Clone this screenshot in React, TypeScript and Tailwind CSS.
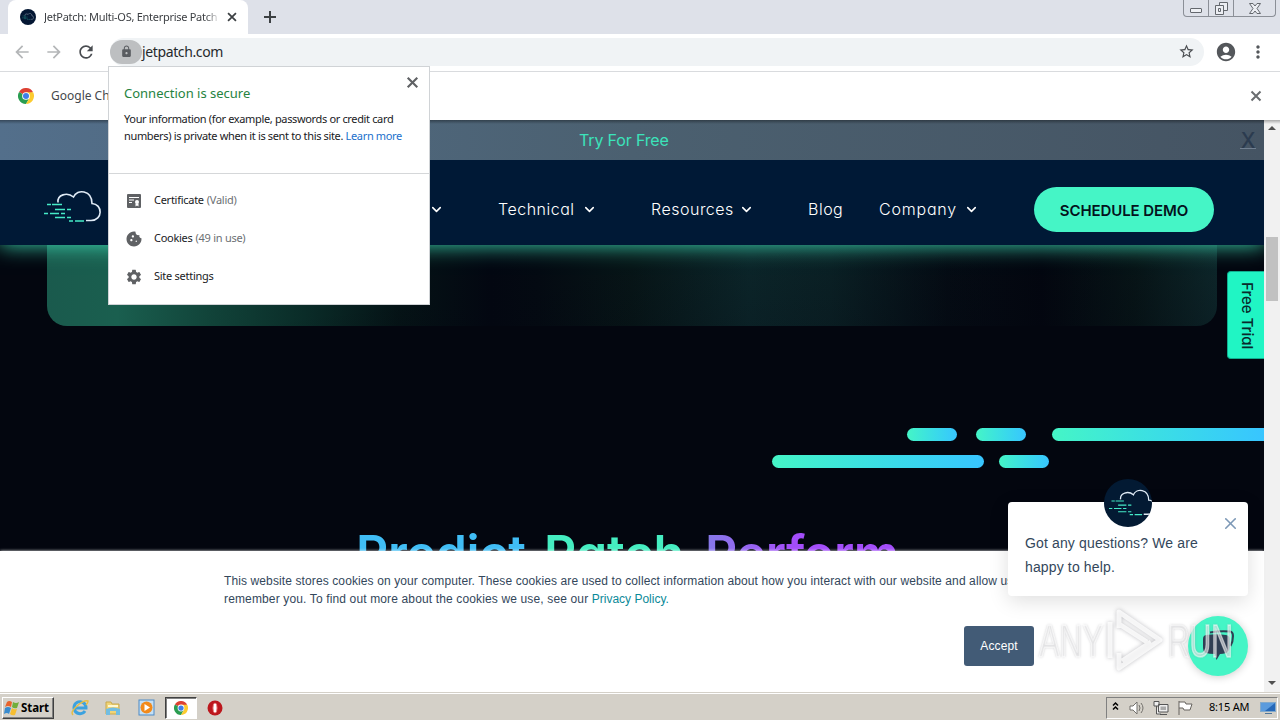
import type { ReactNode } from "react";
import { ChevronDown, X } from "lucide-react";
import {
  MdAccountCircle,
  MdArrowBack,
  MdArrowForward,
  MdCookie,
  MdLock,
  MdMoreVert,
  MdRefresh,
  MdSettings,
  MdStarBorder,
} from "react-icons/md";

function ChromeLogo({ className }: { className: string }) {
  return (
    <svg viewBox="0 0 24 24" className={className}>
      <circle cx="12" cy="12" r="12" fill="#fff" />
      <path d="M12 12 L1.6 6 A12 12 0 0 1 22.4 6 Z" fill="#dd4133" />
      <path d="M12 12 L1.6 6 A12 12 0 0 0 12 24 L17.2 15 Z" fill="#2a9d51" />
      <path d="M12 6.5 H22.7 A12 12 0 0 1 12 24 L17.2 15 Z" fill="#fccb2f" />
      <circle cx="12" cy="12" r="5.8" fill="#fff" />
      <circle cx="12" cy="12" r="4.5" fill="#3f7fe8" />
    </svg>
  );
}

function CloudLogo({ className }: { className: string }) {
  return (
    <svg viewBox="0 0 58 34" fill="none" className={className}>
      <path
        d="M14 12.5 C13 5 23 1.5 29.5 7 C33 -1.5 48 0 48 13.5 C59 14 59 30.500 47 30.500 H42"
        stroke="#dfeaf5"
        strokeWidth="1.600"
      />
      <path
        d="M3 14.500H7M8 14.500H18M11 19.500H21M23 19.500H27M0 23.500H4M6 23.500H15M17 23.500H21M11 27.500H21M23 27.500H27M25 31H29M31 31H40"
        stroke="#45ebc8"
        strokeWidth="1.300"
      />
    </svg>
  );
}

function CloseIcon({ className }: { className: string }) {
  return (
    <svg viewBox="0 0 16 16" className={className}>
      <path d="M3.500 3.500L12.500 12.500M12.500 3.500L3.500 12.500" stroke="currentColor" strokeWidth="2" />
    </svg>
  );
}

function TabStrip() {
  return (
    <div className="flex h-[34px] items-start bg-[#dee1e9]">
      <div className="ml-2 flex h-[34px] w-[240px] items-center rounded-t-lg bg-white pl-3">
        <div className="flex size-4 items-center justify-center rounded-full bg-[#041733]">
          <CloudLogo className="w-3" />
        </div>
        <span className="ml-2 w-[176px] overflow-hidden text-[11px] tracking-[-0.28px] whitespace-nowrap text-[#3c3f43] [mask-image:linear-gradient(to_right,#000_92%,transparent)]">
          JetPatch: Multi-OS, Enterprise Patch
        </span>
        <CloseIcon className="ml-[5px] size-3.5 text-[#3c4043]" />
      </div>
      <svg viewBox="0 0 12 12" className="mt-[11px] ml-4 size-3">
        <path d="M6 0V12M0 6H12" stroke="#3c4043" strokeWidth="2" />
      </svg>
      <div className="mr-1 ml-auto flex h-[17px] w-[93px] rounded-b border border-t-0 border-[#8b8f97] text-[#64686e]">
        <div className="flex w-[25px] items-end justify-center border-r border-[#8b8f97] pb-[3px]">
          <div className="h-[5px] w-3 rounded-[1px] border border-current bg-[#eef0f4]" />
        </div>
        <div className="flex w-[25px] items-start justify-center border-r border-[#8b8f97] pt-0.5">
          <svg viewBox="0 0 13 13" fill="#eceef3" stroke="currentColor" className="size-[13px]">
            <path d="M4.500 0.500h8v8h-8z" />
            <path d="M0.500 3.500h8v9h-8zM3.500 6.500h2v3h-2z" />
          </svg>
        </div>
        <div className="flex flex-1 items-start justify-center pt-[3px]">
          <svg viewBox="0 0 12 11" fill="#eceef3" stroke="currentColor" className="h-[11px] w-3">
            <path d="M0.500 0.500h3.500l2 2.500 2-2.500h3.500L8 5.500l3.500 5H8L6 8l-2 2.500H0.500L4 5.500z" />
          </svg>
        </div>
      </div>
    </div>
  );
}

function Toolbar() {
  return (
    <div className="flex h-[38px] items-center border-b border-[#d9dbde] bg-white pl-3">
      <MdArrowBack className="-mt-0.5 size-5 text-[#b4b6b8]" />
      <MdArrowForward className="-mt-0.5 ml-3 size-5 text-[#b4b6b8]" />
      <MdRefresh className="-mt-0.5 ml-3 size-5 text-[#494c50]" />
      <div className="-mt-0.5 ml-3.5 flex h-7 w-[1094px] items-center rounded-full bg-[#f0f3f5]">
        <div className="flex h-6 w-8 items-center justify-center rounded-full bg-[#bdbfc1]">
          <MdLock className="size-[13px] text-[#5a5d61]" />
        </div>
        <span className="text-[14px] tracking-[-0.37px] text-[#26292c]">jetpatch.com</span>
        <MdStarBorder className="mr-[9px] ml-auto size-[17px] text-[#494c50]" />
      </div>
      <MdAccountCircle className="-mt-0.5 ml-[11px] size-[22px] text-[#54575b]" />
      <MdMoreVert className="-mt-px ml-[11px] size-5 text-[#54575b]" />
    </div>
  );
}

function InfoBar() {
  return (
    <div className="flex h-12 items-center bg-white pl-[18px]">
      <ChromeLogo className="size-4" />
      <span className="ml-[17px] text-[12px] text-[#45484c]">Google Ch</span>
      <CloseIcon className="mr-4 ml-auto size-4 text-[#6a6d70]" />
    </div>
  );
}

function SiteRow({ icon, label, detail }: { icon: ReactNode; label: string; detail?: string }) {
  return (
    <div className="flex h-[38px] items-center pl-4 text-[11px] tracking-[-0.27px] text-[#202124]">
      <span className="flex size-[18px] items-center justify-center pt-px text-[#5f6164]">{icon}</span>
      <span className="ml-[11px]">{label}</span>
      {detail && <span className="ml-[3px] text-[#6c6f73]">{detail}</span>}
    </div>
  );
}

function SecurityPopup() {
  return (
    <div className="absolute top-[66px] left-[108px] z-40 flex h-[239px] w-[322px] flex-col border border-[#d0d3d6] bg-white">
      <div className="relative h-[107px] border-b border-[#d5d7d9] pt-[17px] pl-[15px]">
        <div className="text-[13px] leading-[18px] text-[#26833f]">Connection is secure</div>
        <div className="mt-2 text-[11px] leading-[17px] tracking-[-0.35px] whitespace-nowrap text-[#202124]">
          Your information (for example, passwords or credit card
          <br />
          numbers) is private when it is sent to this site.{" "}
          <span className="text-[#2170cc]">Learn more</span>
        </div>
        <CloseIcon className="absolute top-[7px] right-2 size-[17px] text-[#5f6164]" />
      </div>
      <div className="pt-[7px]">
        <SiteRow
          label="Certificate"
          detail="(Valid)"
          icon={
            <svg viewBox="0 0 16 16" className="size-4">
              <rect x="1" y="1" width="14" height="14" rx="1" fill="currentColor" />
              <path d="M3 4.500h10M3 7h5M3 9.500h3" stroke="#fff" strokeWidth="1.200" />
              <path d="M9.500 10.500v3l1.500-1 1.500 1v-3z" fill="#fff" />
              <circle cx="11" cy="9" r="2" fill="#fff" />
            </svg>
          }
        />
        <SiteRow label="Cookies" detail="(49 in use)" icon={<MdCookie className="size-[18px]" />} />
        <SiteRow label="Site settings" icon={<MdSettings className="size-[18px]" />} />
      </div>
    </div>
  );
}

function NavItem({ label, className }: { label: string; className: string }) {
  return (
    <div className={`flex items-center justify-between ${className}`}>
      <span>{label}</span>
      <ChevronDown className="size-[15px]" strokeWidth={2.5} />
    </div>
  );
}

function SiteHeader() {
  return (
    <>
      <div className="relative z-20 flex h-10 shrink-0 items-center bg-linear-to-r from-[#536f8b] via-[#4b6070] to-[#455463]">
        <div className="absolute inset-x-0 top-0 h-1 bg-linear-to-b from-black/35 to-transparent" />
        <span className="ml-[579px] text-[16px] tracking-[-0.15px] text-[#3be4bb]">Try For Free</span>
        <span className="mr-2 ml-auto flex h-[18px] w-4 items-end justify-center border-b border-[#718091] text-[21px] leading-[15px] font-medium text-[#2b3b4f]">
          X
        </span>
      </div>
      <div className="relative z-10 flex h-[85px] shrink-0 items-center bg-[#001936] pt-[13px] text-[16px] font-light tracking-[0.5px] text-white shadow-[0_0_20px_#3cd8b2]">
        <CloudLogo className="-mt-[5px] ml-11 w-[58px]" />
        <ChevronDown className="ml-[327px] size-[15px]" strokeWidth={2.5} />
        <NavItem label="Technical" className="ml-[54px] w-[99px]" />
        <NavItem label="Resources" className="ml-[54px] w-[103px]" />
        <span className="ml-[54px] w-[35px]">Blog</span>
        <NavItem label="Company" className="ml-9 w-[100px] tracking-[0.800px]" />
        <div className="ml-[55px] flex h-[45px] w-[180px] items-center justify-center rounded-full bg-[#45f5c6] pt-1 text-[15px] font-semibold tracking-[-0.1px] text-[#04121c]">
          SCHEDULE DEMO
        </div>
      </div>
    </>
  );
}

function Hero() {
  return (
    <div className="flex h-[306px] shrink-0 flex-col overflow-hidden bg-[#03060f]">
      <div className="mx-[47px] h-[81px] shrink-0 rounded-b-[20px] bg-[linear-gradient(170deg,transparent_40%,rgba(3,7,17,0.35)),linear-gradient(to_right,#1a5a4d_0%,#1a5f4f_6%,#114339_14%,#0a2c28_22%,#051316_30%,#030711_38%,#040a12_42%,#071517_50%,#0c262a_60%,#0b2226_67%,#050c14_77%,#03060f_85%,#081718_93%,#102e30_100%)]" />
      <div className="mt-[102px] ml-[907px] flex h-[12.500px] shrink-0 gap-[19px]">
        <div className="w-[50px] rounded-full bg-linear-to-r from-[#45f5c6] to-[#38c5ff]" />
        <div className="w-[50px] rounded-full bg-linear-to-r from-[#45f5c6] to-[#38c5ff]" />
        <div className="ml-[7px] flex-1 rounded-l-full bg-linear-to-r from-[#45f5c6] to-[#38c5ff]" />
      </div>
      <div className="mt-[14.500px] ml-[772px] flex h-[12.500px] shrink-0 gap-[15px]">
        <div className="w-[212px] rounded-full bg-linear-to-r from-[#45f5c6] to-[#38c5ff]" />
        <div className="w-[50px] rounded-full bg-linear-to-r from-[#45f5c6] to-[#38c5ff]" />
      </div>
      <h1 className="mt-[55px] ml-[356px] flex text-[50px] leading-[60px] font-semibold">
        <span className="w-[188px] tracking-[-0.3px] text-[#40bdf5]">Predict.</span>
        <span className="w-[161px] text-[#45edc1]">Patch.</span>
        <span className="bg-linear-to-r from-[#8579e8] to-[#a34dfa] to-40% bg-clip-text tracking-[-0.400px] text-transparent">
          Perform.
        </span>
      </h1>
    </div>
  );
}

function CookieBanner() {
  return (
    <div className="relative z-10 flex flex-1 flex-col bg-white pt-[21px] pl-56 font-['Liberation_Sans',Arial,sans-serif] text-[12px] leading-[18px] text-[#33475b] shadow-[0_0_3px_rgba(255,255,255,0.9)]">
      <p className="whitespace-nowrap">
        <span className="tracking-[0.11px]">
          This website stores cookies on your computer. These cookies are used to collect information about how you interact with our website and allow us to
        </span>
        <br />
        <span className="tracking-[0.14px]">remember you. To find out more about the cookies we use, see our </span>
        <span className="text-[#0b8a99]">Privacy Policy.</span>
      </p>
      <button className="mt-[18px] ml-[740px] h-10 w-[70px] rounded-[3px] bg-[#425b76] tracking-[0.1px] text-white">
        Accept
      </button>
    </div>
  );
}

function ChatWidget() {
  return (
    <>
      <div className="absolute top-[502px] left-[1008px] z-20 h-[94px] w-60 rounded bg-white pt-[29px] pl-[17px] font-['Liberation_Sans',Arial,sans-serif] text-[14px] leading-6 tracking-[0.14px] text-[#33475b] shadow-[0_5px_20px_rgba(0,0,0,0.13)]">
        Got any questions? We are
        <br />
        happy to help.
        <div className="absolute -top-[23px] left-24 flex size-12 items-center overflow-hidden rounded-full bg-[#031a33]">
          <CloudLogo className="ml-[5px] w-12 shrink-0" />
        </div>
        <X className="absolute top-3 right-2 size-[19px] text-[#7c98b6]" strokeWidth={2} />
      </div>
      <div className="absolute top-[616px] left-[1188px] z-20 flex size-[60px] items-center justify-center rounded-full bg-[#45f5c6] shadow-[0_1px_8px_rgba(0,0,0,0.2)]">
        <svg viewBox="0 0 32 32" className="size-8 text-[#2f3f54]">
          <path
            d="M8 2.500 Q18 0.500 28 1.500 Q31 2 31 6 Q31 12 28.500 16"
            fill="none"
            stroke="currentColor"
            strokeWidth="2"
          />
          <path
            d="M4 5 Q14 3.500 24 5 Q27.500 5.500 27.500 9 V17 Q27.500 22 24 23 Q21 24 18 24 L14.500 30 L13 24 Q7 24 4 23 Q1 22 1 17 V9 Q1 5.500 4 5Z"
            fill="currentColor"
          />
        </svg>
      </div>
    </>
  );
}

function Watermark() {
  return (
    <div className="pointer-events-none absolute top-[606px] left-[1039px] z-30 flex h-[70px] w-[200px] items-center font-['Liberation_Sans',Arial,sans-serif] text-[46px] leading-none text-white/55 [text-shadow:0_0_3px_rgba(80,80,90,0.4)]">
      <span className="w-[65px] origin-left scale-x-[0.680] [-webkit-text-stroke:1.500px_rgba(255,255,255,0.6)]">ANY</span>
      <svg viewBox="0 0 60 66" fill="none" className="h-[66px] w-[60px] shrink-0 drop-shadow-[0_0_2px_rgba(80,80,90,0.45)]">
        <path
          d="M6 14V50M15 20V4L56 32L15 60V45M15 16L43 34M18 53L47 34"
          stroke="#fff"
          strokeOpacity="0.800"
          strokeWidth="5"
          strokeLinejoin="round"
        />
      </svg>
      <span className="ml-1 w-[66px] origin-left scale-x-[0.650] [-webkit-text-stroke:1.500px_rgba(255,255,255,0.5)]">RUN</span>
    </div>
  );
}

function Scrollbar() {
  return (
    <div className="flex w-4 shrink-0 flex-col items-center justify-between bg-[#f1f1f1] bg-[linear-gradient(to_bottom,rgba(0,0,0,0.3),transparent_4px)] pt-1.5 pb-[7px] text-[#505050]">
      <svg viewBox="0 0 8 4" className="h-1 w-2">
        <path d="M0 4L4 0L8 4Z" fill="currentColor" />
      </svg>
      <div className="mt-[107px] mb-auto h-16 w-3 bg-[#c1c1c1]" />
      <svg viewBox="0 0 8 4" className="h-1 w-2">
        <path d="M0 0L4 4L8 0Z" fill="currentColor" />
      </svg>
    </div>
  );
}

function Taskbar() {
  return (
    <div className="flex h-7 items-center border-t border-[#d4d0c8] bg-[#d4d0c8] pt-0.5 pl-0.5 shadow-[inset_0_1px_#fff]">
      <div className="flex h-[22px] w-[52px] items-center border border-t-white border-r-[#404040] border-b-[#404040] border-l-white pl-px shadow-[inset_-1px_-1px_#808080]">
        <svg viewBox="0 0 16 16" className="size-4">
          <path d="M3 2Q5 0 8 2L7 7Q4 5 1 7Z" fill="#e8632c" />
          <path d="M9 2Q12 4 15 2L13 8Q10 9 8 7Z" fill="#70ae3c" />
          <path d="M1 8Q4 6 7 8L5 14Q3 12 0 14Z" fill="#398bce" />
          <path d="M8 8Q10 10 13 9L11 15Q8 16 6 14Z" fill="#f6be31" />
        </svg>
        <span className="ml-px text-[11.500px] font-bold tracking-[-0.1px] text-black">Start</span>
      </div>
      <svg viewBox="0 0 18 18" fill="none" className="ml-[17px] size-[18px]">
        <path d="M14 12A6 6 0 1 1 15 9H4" stroke="#3ca2df" strokeWidth="3" />
        <path d="M2 16Q-1 13 6 7T17 2Q17 4 15 6" stroke="#e6bd45" strokeWidth="1.500" />
      </svg>
      <svg viewBox="0 0 18 18" className="ml-[15px] size-[18px]">
        <path d="M2 3H7L8 5H15V15H2Z" fill="#f0d477" stroke="#c8a84c" />
        <path d="M4 7H14" stroke="#fff8d0" strokeWidth="2" />
        <path d="M2 16V10Q9 7 16 10V16H12V12H6V16Z" fill="#71bde2" />
      </svg>
      <svg viewBox="0 0 18 18" className="ml-4 size-[18px]">
        <rect x="1" y="1" width="15" height="15" fill="#c5e0f5" stroke="#4c8ac5" />
        <circle cx="8.500" cy="8.500" r="6" fill="#f28a1b" />
        <path d="M6.500 5L12 8.500L6.500 12Z" fill="#fff" />
      </svg>
      <div className="ml-[9px] flex h-[22px] w-8 items-center justify-center border border-t-[#404040] border-r-white border-b-white border-l-[#404040] bg-white shadow-[inset_1px_1px_#808080]">
        <ChromeLogo className="size-3.5" />
      </div>
      <svg viewBox="0 0 16 16" className="ml-2.5 size-4">
        <circle cx="8" cy="8" r="7.500" fill="#bc171d" />
        <ellipse cx="8" cy="8" rx="2" ry="5" fill="#fff" stroke="#ed8080" />
      </svg>
      <div className="mr-0.5 ml-auto flex h-[22px] w-[172px] items-center border border-t-[#808080] border-r-white border-b-white border-l-[#808080] pl-1">
        <svg viewBox="0 0 10 10" fill="none" stroke="#000" className="-mt-1 size-[10px]">
          <path d="M2 4.500L4.500 2L7 4.500M2 8.500L4.500 6L7 8.500" strokeWidth="1.500" />
        </svg>
        <svg viewBox="0 0 16 16" fill="#fff" stroke="#73716c" className="ml-2 size-4">
          <path d="M1 6H4L8 2V14L4 10H1Z" />
          <path d="M10 5Q12 8 10 11M12 3Q16 8 12 13" fill="none" />
        </svg>
        <svg viewBox="0 0 16 16" fill="#eee" stroke="#555" className="ml-2 size-4">
          <path d="M5.500 4.500H15V12H5.500ZM7 14.500H14M1 1.500H6V6H1ZM3.500 6V14H8" />
          <path d="M7.500 6.500H13V10H7.500Z" fill="#aaa" stroke="none" />
        </svg>
        <svg viewBox="0 0 16 16" fill="#fff" stroke="#66635e" className="ml-2 size-4">
          <path d="M2 15V1M2 2H8L9 4H15L13 10H7L6 8H2" />
        </svg>
        <span className="ml-4 w-[44px] text-[11px] tracking-[-0.2px] whitespace-nowrap text-black">8:15 AM</span>
        <svg viewBox="0 0 16 16" className="ml-[7px] size-4">
          <rect x="0.500" y="2.500" width="15" height="9" fill="#2668b8" stroke="#82a9cb" />
          <path d="M1 3H15L5 11H1Z" fill="#5b9bdd" />
          <path d="M5 13.500H12" stroke="#50779a" />
        </svg>
      </div>
    </div>
  );
}

export default function App() {
  return (
    <div className="relative flex h-[720px] w-[1280px] flex-col overflow-hidden bg-white font-['Noto_Sans',sans-serif]">
      <TabStrip />
      <Toolbar />
      <InfoBar />
      <div className="flex h-[572px]">
        <main className="flex w-[1264px] flex-col overflow-hidden font-['Inter',sans-serif] [font-feature-settings:'cv11']">
          <SiteHeader />
          <Hero />
          <CookieBanner />
        </main>
        <Scrollbar />
      </div>
      <Taskbar />

      <SecurityPopup />
      <div className="absolute top-[271px] left-[1227px] z-20 flex h-[88px] w-[37px] items-center justify-center rounded-l border border-r-0 border-[#0fae8f] bg-[#20f5c4] pt-0.5 pl-0.5 font-['Inter',sans-serif] text-[15px] font-medium text-[#082b2c] [font-feature-settings:'cv11'] [writing-mode:vertical-rl]">
        Free Trial
      </div>
      <ChatWidget />
      <Watermark />
    </div>
  );
}
